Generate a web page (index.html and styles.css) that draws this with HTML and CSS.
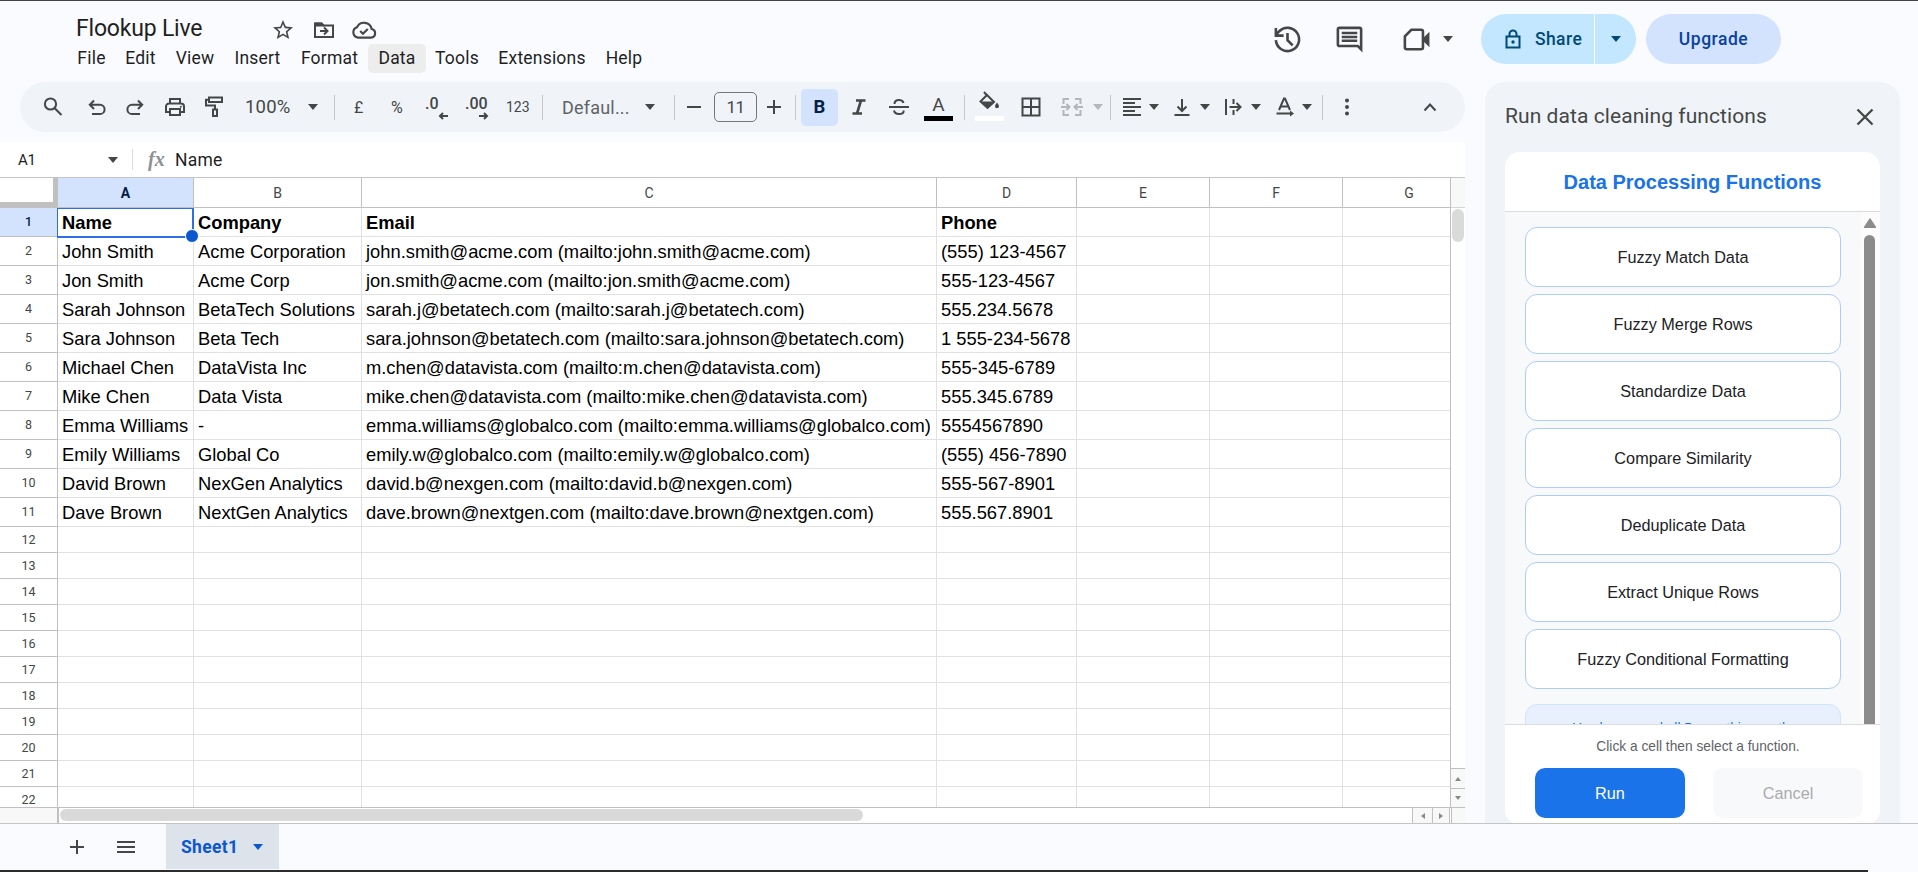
FILE: index.html
```html
<!DOCTYPE html>
<html lang="en">
<head>
    <meta charset="UTF-8">
    <meta name="viewport" content="width=device-width, initial-scale=1.0">
    <title>Flookup Live</title>
    <link rel="stylesheet" href="styles.css">
</head>
<body>

<header>
    <div class="doc">
        <div class="doc-title">
            <h1>Flookup Live</h1>
            <svg class="icon" viewBox="0 0 24 24"><path class="fill" d="M22 9.24l-7.19-.62L12 2 9.19 8.63 2 9.24l5.46 4.73L5.82 21 12 17.27 18.18 21l-1.63-7.03L22 9.24zM12 15.4l-3.76 2.27 1-4.28-3.32-2.88 4.38-.38L12 6.1l1.71 4.04 4.38.38-3.32 2.88 1 4.28L12 15.4z"/></svg>
            <svg class="icon" viewBox="0 0 24 24"><path d="M3 5.500h6.500l2 2H21V19H3z"/><path class="fill" d="M2.500 4.500h7.500l2.500 2.500v1.500h-10z"/><path d="M8 13h7M12 9.500l3.500 3.500-3.500 3.500"/></svg>
            <svg class="icon cloud" viewBox="0 0 24 24"><path d="M6.5 19h12a4 4 0 0 0 .6-7.9 7.2 7.2 0 0 0-13.6-1.6A4.9 4.9 0 0 0 6.5 19zM8.5 13l2.5 2.5 4.5-4.5"/></svg>
        </div>
        <nav>
            <span>File</span>
            <span>Edit</span>
            <span>View</span>
            <span>Insert</span>
            <span>Format</span>
            <span class="active">Data</span>
            <span>Tools</span>
            <span>Extensions</span>
            <span>Help</span>
        </nav>
    </div>
    <div class="actions">
        <svg class="icon-lg" viewBox="0 0 24 24"><path d="M3 12.500a9 9 0 1 0 2.600-6.900L3.500 8M3 3v6h6M12 7v5.500l4 4"/></svg>
        <svg class="icon-lg" viewBox="0 0 24 24"><path class="fill" d="M22 4c0-1.1-.9-2-2-2H4c-1.1 0-2 .9-2 2v12c0 1.1.9 2 2 2h14l4 4V4zm-2 13.2L18.8 16H4V4h16v13.2zM6 12h12v2H6zm0-3h12v2H6zm0-3h12v2H6z"/></svg>
        <svg class="icon-lg" viewBox="0 0 24 24"><path d="M8 4.500h7.500a1.500 1.500 0 0 1 1.500 1.500v12a1.500 1.500 0 0 1-1.500 1.500h-11A1.500 1.500 0 0 1 3 18V9.500z"/><path class="fill" d="M17 11l5-5v12l-5-5z"/></svg>
        <i class="caret"></i>
        <div class="share">
            <span class="share-main">
                <svg viewBox="0 0 16 20"><path d="M1.5 7.5h13v11h-13zM4.500 7.500V5a3.500 3.500 0 0 1 7 0v2.500"/><circle cx="8" cy="13" r="1.7"/></svg>
                Share
            </span>
            <span class="share-more"><i class="caret"></i></span>
        </div>
        <div class="upgrade">Upgrade</div>
    </div>
</header>

<div class="content">
    <div class="editor">
        <div class="toolbar">
            <svg class="icon" viewBox="0 0 24 24"><circle cx="9.5" cy="9" r="5.6"/><path d="M13.7 13.2 20.5 20"/></svg>
            <svg class="icon" viewBox="0 0 24 24"><path d="M7 19h8a4.6 4.6 0 0 0 0-9.2H5M9 5.500 4.800 9.800 9 14"/></svg>
            <svg class="icon" viewBox="0 0 24 24"><path d="M17 19H9a4.6 4.6 0 0 1 0-9.2h10M15 5.500l4.200 4.300L15 14"/></svg>
            <svg class="icon" viewBox="0 0 24 24"><path d="M7 8V4h10v4M7 17H3v-5.500A3 3 0 0 1 6 8.500h12a3 3 0 0 1 3 3V17h-4M7 14h10v6H7z"/><circle class="fill" cx="17.8" cy="11.7" r="1"/></svg>
            <svg class="icon" viewBox="0 0 24 24"><path d="M7 2.500h13v4.500H7zM7 4.800H4v5.700h9V14M11 14.500h4V21h-4z"/></svg>
            <span class="txt zoom">100%</span>
            <i class="caret"></i>
            <i class="sep"></i>
            <span class="txt sm">£</span>
            <span class="txt sm">%</span>
            <span class="dec">.0<svg viewBox="0 0 10 8"><path d="M10 4H2M5 1 2 4l3 3"/></svg></span>
            <span class="dec">.00<svg viewBox="0 0 10 8"><path d="M0 4h8M5 1l3 3-3 3"/></svg></span>
            <span class="txt num">123</span>
            <i class="sep"></i>
            <span class="txt font">Defaul...</span>
            <i class="caret"></i>
            <i class="sep"></i>
            <svg class="icon" viewBox="0 0 24 24"><path d="M5 12h14"/></svg>
            <span class="size">11</span>
            <svg class="icon" viewBox="0 0 24 24"><path d="M5 12h14M12 5v14"/></svg>
            <i class="sep"></i>
            <span class="bold">B</span>
            <svg class="icon" viewBox="0 0 24 24"><path class="heavy" d="M9 5.500h9.500M5.500 18.500H15M14 5.500l-4 13"/></svg>
            <svg class="icon" viewBox="0 0 24 24"><path d="M2 12h20M7.500 9c0-2.500 2-4 4.500-4s4 1 4.500 3M7 15.500c.5 2.300 2.500 3.500 5 3.500s4.700-1.300 4.700-3.600"/></svg>
            <span class="color">A</span>
            <i class="sep"></i>
            <span class="color paint"><svg viewBox="0 0 24 20"><path d="M8 1l3 3.500M11 4 18 11l-6.500 6L4.500 10.500z"/><path class="fill" d="M4 10.500h14l-6.300 6.800zM21 11.500c1.300 1.800 2 2.700 2 3.700a2 2 0 0 1-4 0c0-1 .7-1.900 2-3.700z"/></svg></span>
            <svg class="icon" viewBox="0 0 24 24"><path d="M3.500 3.500h17v17h-17zM12 3.500v17M3.500 12h17"/></svg>
            <svg class="icon off" viewBox="0 0 24 24"><path d="M9 4H3.500v5M3.500 15v5H9M15 4h5.500v5M20.500 15v5H15M1 12h8M6.500 9l3 3-3 3M23 12h-8M17.500 9l-3 3 3 3"/></svg>
            <i class="caret off"></i>
            <i class="sep"></i>
            <svg class="icon" viewBox="0 0 24 24"><path d="M3 4h18M3 8h12M3 12h18M3 16h12M3 20h18"/></svg>
            <i class="caret"></i>
            <svg class="icon" viewBox="0 0 24 24"><path d="M4.500 20h15M12 4v12M7.500 11.500 12 16l4.500-4.500"/></svg>
            <i class="caret"></i>
            <svg class="icon" viewBox="0 0 24 24"><path d="M5 4v16M12.500 4v5M12.500 15v5M8.500 12H19M15.500 8l4 4-4 4"/></svg>
            <i class="caret"></i>
            <svg class="icon" viewBox="0 0 24 24"><path d="M6 15 11 3.500h1L17 15M8 11.500h7M3.500 18.500H18"/><path class="fill" d="M17 15.500l4 3-4 3z"/></svg>
            <i class="caret"></i>
            <i class="sep"></i>
            <svg class="icon" viewBox="0 0 24 24"><circle class="fill" cx="12" cy="5.5" r="2"/><circle class="fill" cx="12" cy="12" r="2"/><circle class="fill" cx="12" cy="18.5" r="2"/></svg>
            <svg class="icon" viewBox="0 0 24 24"><path d="M6.500 15.500 12 9.500l5.500 6"/></svg>
        </div>

        <div class="formula-bar">
            <span class="cell-name">A1</span>
            <i class="caret"></i>
            <span class="fx">fx</span>
            <span class="formula">Name</span>
        </div>

        <div class="sheet">
            <div class="grid-area">
                <table>
                    <colgroup>
                        <col class="c-num"><col class="c-a"><col class="c-b"><col class="c-c"><col class="c-d"><col class="c-e"><col class="c-e"><col class="c-e">
                    </colgroup>
                    <thead>
                        <tr><th class="corner"></th><th class="selected">A</th><th>B</th><th>C</th><th>D</th><th>E</th><th>F</th><th>G</th></tr>
                    </thead>
                    <tbody id="rows"></tbody>
                </table>
                <div class="selection"></div>
            </div>
            <div class="vscroll">
                <div class="vscroll-head"></div>
                <div class="vtrack"><div class="vthumb"></div></div>
                <div class="vbtn"><i class="arrow up"></i></div>
                <div class="vbtn last"><i class="arrow down"></i></div>
            </div>
        </div>
        <div class="hscroll">
            <div class="hscroll-head"></div>
            <div class="htrack"><div class="hthumb"></div></div>
            <div class="hbtn"><i class="arrow left"></i></div>
            <div class="hbtn last"><i class="arrow right"></i></div>
            <div class="hend"></div>
        </div>
    </div>

    <aside>
        <div class="side-title">
            <h2>Run data cleaning functions</h2>
            <svg viewBox="0 0 18 18"><path d="M1.500 1.500l15 15M16.500 1.500l-15 15"/></svg>
        </div>
        <div class="card">
            <h3>Data Processing Functions</h3>
            <div class="card-body">
                <div class="functions">
                    <button>Fuzzy Match Data</button>
                    <button>Fuzzy Merge Rows</button>
                    <button>Standardize Data</button>
                    <button>Compare Similarity</button>
                    <button>Deduplicate Data</button>
                    <button>Extract Unique Rows</button>
                    <button>Fuzzy Conditional Formatting</button>
                    <div class="notice">You have used all 5 runs this month.</div>
                </div>
                <div class="side-scroll">
                    <svg viewBox="0 0 12 10"><path d="M6 1.500 10.800 8.800H1.200z"/></svg>
                    <div class="side-thumb"></div>
                </div>
            </div>
            <div class="card-footer">
                <p>Click a cell then select a function.</p>
                <div class="buttons">
                    <button class="run">Run</button>
                    <button class="cancel" disabled>Cancel</button>
                </div>
            </div>
        </div>
    </aside>
</div>

<footer>
    <svg class="add" viewBox="0 0 14 14"><path d="M7 0v14M0 7h14"/></svg>
    <svg class="all" viewBox="0 0 18 14"><path d="M0 2h18M0 7h18M0 12h18"/></svg>
    <div class="tab">Sheet1 <i class="caret"></i></div>
</footer>

<script>
const ROW_COUNT = 22;
const COLUMNS = 7;

const data = [
    ['Name', 'Company', 'Email', 'Phone'],
    ['John Smith', 'Acme Corporation', 'john.smith@acme.com (mailto:john.smith@acme.com)', '(555) 123-4567'],
    ['Jon Smith', 'Acme Corp', 'jon.smith@acme.com (mailto:jon.smith@acme.com)', '555-123-4567'],
    ['Sarah Johnson', 'BetaTech Solutions', 'sarah.j@betatech.com (mailto:sarah.j@betatech.com)', '555.234.5678'],
    ['Sara Johnson', 'Beta Tech', 'sara.johnson@betatech.com (mailto:sara.johnson@betatech.com)', '1 555-234-5678'],
    ['Michael Chen', 'DataVista Inc', 'm.chen@datavista.com (mailto:m.chen@datavista.com)', '555-345-6789'],
    ['Mike Chen', 'Data Vista', 'mike.chen@datavista.com (mailto:mike.chen@datavista.com)', '555.345.6789'],
    ['Emma Williams', '-', 'emma.williams@globalco.com (mailto:emma.williams@globalco.com)', '5554567890'],
    ['Emily Williams', 'Global Co', 'emily.w@globalco.com (mailto:emily.w@globalco.com)', '(555) 456-7890'],
    ['David Brown', 'NexGen Analytics', 'david.b@nexgen.com (mailto:david.b@nexgen.com)', '555-567-8901'],
    ['Dave Brown', 'NextGen Analytics', 'dave.brown@nextgen.com (mailto:dave.brown@nextgen.com)', '555.567.8901']
];

const tbody = document.getElementById('rows');

for (let r = 0; r < ROW_COUNT; r++) {
    const tr = document.createElement('tr');
    const values = data[r] || [];
    if (data[r]) tr.className = 'filled';

    const num = document.createElement('th');
    num.textContent = r + 1;
    if (r === 0) num.className = 'selected';
    tr.appendChild(num);

    for (let c = 0; c < COLUMNS; c++) {
        const td = document.createElement('td');
        td.textContent = values[c] || '';
        tr.appendChild(td);
    }
    tbody.appendChild(tr);
}
</script>

</body>
</html>
```
FILE: styles.css
```css
* {
    box-sizing: border-box;
}

body {
    margin: 0;
    width: 1918px;
    height: 872px;
    overflow: hidden;
    background: #f9fbff;
    border-top: 1px solid #444446;
    font-family: Roboto, Arial, sans-serif;
    color: #1f1f1f;
    display: flex;
    flex-direction: column;
}

svg {
    display: block;
    fill: none;
    stroke: #444746;
    stroke-width: 2;
}

svg .fill {
    fill: #444746;
    stroke: none;
}

.icon {
    width: 24px;
    height: 24px;
}

.icon-lg {
    width: 31px;
    height: 31px;
}

.caret {
    display: block;
    width: 0;
    border: 5px solid transparent;
    border-top: 6px solid #444746;
    border-bottom: 0;
}

/* ---------- header ---------- */

header {
    height: 81px;
    flex: none;
    display: flex;
    justify-content: space-between;
    padding: 0 137px 0 68px;
}

.doc-title {
    display: flex;
    align-items: center;
    height: 43px;
    padding: 14px 0 0 8px;
}

.doc-title h1 {
    margin: -2px 0 0;
    width: 195px;
    font-size: 23px;
    font-weight: 400;
    letter-spacing: -0.2px;
}

.doc-title .icon {
    margin-right: 17px;
}

.doc-title .cloud {
    width: 26px;
    height: 26px;
    margin-left: -2px;
}

nav {
    display: grid;
    grid-template-columns: 47px 51px 58px 67px 77px 58px 62px 108px 56px;
    font-size: 17.5px;
    line-height: 28px;
    letter-spacing: 0.2px;
    text-align: center;
    color: #1f1f1f;
}

nav .active {
    background: #ededed;
    border-radius: 5px;
    height: 29px;
}

.actions {
    display: flex;
    align-items: center;
    height: 50px;
    margin-top: 13px;
}

.actions .icon-lg {
    margin-right: 31px;
}

.actions .icon-lg:nth-child(3) {
    margin-right: 11px;
    margin-left: 5px;
}

.share {
    display: flex;
    height: 50px;
    margin-left: 28px;
    font-size: 17.5px;
    font-weight: 500;
    color: #004a77;
}

.share svg {
    width: 16px;
    height: 20px;
    stroke: #004a77;
    margin-right: 14px;
}

.share circle {
    fill: #004a77;
    stroke: none;
}

.share-main,
.share-more {
    display: flex;
    align-items: center;
    background: #c2e7ff;
}

.share-main {
    width: 113px;
    padding-left: 24px;
    border-radius: 25px 0 0 25px;
    margin-right: 1px;
    padding-bottom: 1px;
    letter-spacing: 0.4px;
}

.share-more {
    width: 41px;
    padding-left: 16px;
    border-radius: 0 25px 25px 0;
}

.share-more .caret {
    border-top-color: #004a77;
}

.upgrade {
    width: 135px;
    height: 50px;
    line-height: 50px;
    margin-left: 10px;
    border-radius: 25px;
    background: #d3e3fd;
    color: #0842a0;
    text-align: center;
    font-size: 17.5px;
    font-weight: 500;
    letter-spacing: 0.5px;
}

/* ---------- editor ---------- */

.content {
    height: 741px;
    flex: none;
    display: flex;
    justify-content: space-between;
    padding-right: 18px;
}

.editor {
    width: 1465px;
}

.toolbar {
    height: 50px;
    margin: 0 0 10px 20px;
    padding-left: 21px;
    border-radius: 25px;
    background: #f0f4f9;
    display: grid;
    grid-template-columns: 44px 38px 40px 39px 43px 63px 26px 20px 37px 34px 40px 41px 36px 20px 83px 29px 8px 32px 48px 33px 6px 46px 40px 37px 40px 11px 44px 41px 33px 17px 10px 29px 21px 30px 21px 30px 22px 29px 20px 13px 83px 24px;
    align-items: center;
    justify-items: start;
    color: #444746;
    white-space: nowrap;
}

.toolbar .off {
    opacity: 0.35;
}

.toolbar .heavy {
    stroke-width: 2.6;
}

.sep {
    width: 1px;
    height: 25px;
    background: #c7c7c7;
}

.txt {
    font-size: 17.5px;
}

.zoom {
    font-size: 18.5px;
    letter-spacing: 0.2px;
}

.sm {
    font-size: 16px;
}

.num {
    font-size: 14px;
}

.font {
    color: #5f6368;
    font-size: 18px;
    letter-spacing: 0.2px;
}

.dec {
    position: relative;
    font-size: 16px;
    font-weight: 500;
    line-height: 20px;
    padding-bottom: 7px;
}

.dec svg {
    position: absolute;
    right: -9px;
    bottom: 1px;
    width: 10px;
    height: 8px;
}

.dec:nth-child(12) svg {
    right: -1px;
}

.size {
    width: 43px;
    height: 30px;
    line-height: 28px;
    border: 1px solid #747775;
    border-radius: 5px;
    text-align: center;
    font-size: 17px;
    letter-spacing: -0.6px;
}

.bold {
    width: 37px;
    height: 37px;
    line-height: 36px;
    border-radius: 5px;
    background: #d3e3fd;
    color: #041e49;
    text-align: center;
    font-weight: 700;
    font-size: 18.5px;
}

.color {
    width: 29px;
    height: 26px;
    margin-top: 1px;
    border-bottom: 5px solid #000;
    text-align: center;
    font-size: 19px;
    line-height: 19px;
}

.paint {
    border-color: #fff;
    margin-top: -3px;
    height: 30px;
}

.paint svg {
    width: 24px;
    height: 20px;
    margin-left: 1px;
}

.formula-bar {
    height: 36px;
    background: #fff;
    border-bottom: 1px solid #c4c4c4;
    display: flex;
    align-items: center;
    padding-left: 18px;
    font-size: 17.5px;
}

.cell-name {
    width: 90px;
    font-size: 15px;
    letter-spacing: -0.4px;
}

.fx {
    margin-left: 14px;
    padding-left: 15px;
    width: 43px;
    line-height: 21px;
    border-left: 1px solid #dadce0;
    color: #8e9194;
    font: italic 700 20px/21px "Liberation Serif", serif;
}

.formula {
    letter-spacing: 0.2px;
}

/* ---------- sheet ---------- */

.sheet {
    display: flex;
    height: 629px;
}

.grid-area {
    position: relative;
    width: 1451px;
    overflow: hidden;
    border-right: 1px solid #c0c0c0;
    background: #fff;
}

table {
    table-layout: fixed;
    width: 1476px;
    border-collapse: separate;
    border-spacing: 0;
}

.c-num { width: 58px; }
.c-a { width: 136px; }
.c-b { width: 168px; }
.c-c { width: 575px; }
.c-d { width: 140px; }
.c-e { width: 133px; }

th,
td {
    padding: 0;
    height: 26px;
    border-right: 1px solid #e1e1e1;
    border-bottom: 1px solid #e1e1e1;
}

th {
    border-color: #c0c0c0;
    color: #444746;
    font-size: 12.5px;
    font-weight: 400;
    line-height: 22px;
}

thead th {
    height: 30px;
    font-size: 14px;
}

.filled th,
.filled td {
    height: 29px;
}

td {
    padding: 1px 0 0 4px;
    color: #000;
    font: 18.33px/24px "Liberation Sans", Arial, sans-serif;
    white-space: nowrap;
}

tbody tr:first-child td {
    font-weight: 700;
}

th.selected {
    background: #d3e3fd;
    color: #041e49;
    font-weight: 500;
}

thead th.selected {
    font-weight: 700;
}

th.corner {
    border-right: 5px solid #c0c0c0;
    border-bottom: 6px solid #c0c0c0;
}

.selection {
    position: absolute;
    left: 57px;
    top: 30px;
    width: 137px;
    height: 30px;
    border: 2px solid #2f6fe4;
    border-left-width: 1px;
    border-top-width: 1px;
}

.selection::after {
    content: "";
    position: absolute;
    right: -7px;
    bottom: -7px;
    width: 12px;
    height: 12px;
    border: 1px solid #fff;
    border-radius: 50%;
    background: #0b57d0;
}

.vscroll {
    width: 14px;
    background: #fff;
    display: flex;
    flex-direction: column;
}

.vscroll-head {
    height: 30px;
    background: #f8f8f8;
    border-bottom: 1px solid #d5d5d5;
}

.vtrack {
    flex: 1;
    padding: 1px;
}

.vthumb {
    height: 33px;
    border-radius: 6px;
    background: #dadada;
}

.vbtn {
    height: 20px;
    background: #f8f8f8;
    border-top: 1px solid #c0c0c0;
    display: flex;
    align-items: center;
    justify-content: center;
}

.vbtn.last {
    height: 19px;
}

.arrow {
    border: 3px solid transparent;
}

.up { border-bottom: 4px solid #888; border-top: 0; }
.down { border-top: 4px solid #888; border-bottom: 0; }
.left { border-right: 4px solid #888; border-left: 0; }
.right { border-left: 4px solid #888; border-right: 0; }

.hscroll {
    height: 16px;
    background: #fff;
    border-top: 1px solid #c0c0c0;
    display: flex;
}

.hscroll-head {
    width: 59px;
    background: #f8f8f8;
    border-right: 2px solid #c0c0c0;
}

.htrack {
    flex: 1;
    padding: 1px;
}

.hthumb {
    width: 803px;
    height: 12px;
    border-radius: 6px;
    background: #d9d9d9;
}

.hbtn {
    width: 20px;
    background: #f8f8f8;
    border-left: 1px solid #c0c0c0;
    display: flex;
    align-items: center;
    justify-content: center;
}

.hbtn.last {
    width: 18px;
    border-right: 1px solid #c0c0c0;
}

.hend {
    width: 14px;
    background: #f8f8f8;
    border-left: 1px solid #c0c0c0;
    margin-left: 1px;
}

/* ---------- sidebar ---------- */

aside {
    width: 415px;
    padding: 0 20px;
    border-radius: 20px 20px 0 0;
    background: #f0f4f9;
    overflow: hidden;
}

.side-title {
    height: 70px;
    display: flex;
    align-items: center;
    justify-content: space-between;
    padding-right: 6px;
}

.side-title h2 {
    margin: -2px 0 0;
    font-size: 21px;
    font-weight: 400;
    letter-spacing: 0.07px;
    color: #444746;
}

.side-title svg {
    width: 18px;
    height: 18px;
    stroke-width: 2.3;
}

.card {
    height: 673px;
    border-radius: 15px;
    background: #fff;
    overflow: hidden;
    font-family: "Liberation Sans", Arial, sans-serif;
}

.card h3 {
    margin: 0;
    height: 60px;
    line-height: 60px;
    border-bottom: 1px solid #dadce0;
    text-align: center;
    font-size: 20px;
    color: #1a73e8;
}

.card-body {
    height: 512px;
    display: flex;
    background: #f8f9fb;
    overflow: hidden;
}

.functions {
    width: 356px;
    padding: 15px 20px 0;
}

.functions button {
    display: block;
    width: 316px;
    height: 60px;
    margin-bottom: 7px;
    border: 1px solid #aecbfa;
    border-radius: 12px;
    background: #fff;
    color: #202124;
    font: 16.25px "Liberation Sans", Arial, sans-serif;
}

.notice {
    margin-top: 15px;
    height: 70px;
    padding-top: 16px;
    border: 1px solid #d2e3fc;
    border-radius: 12px;
    background: #e8f0fe;
    color: #1a73e8;
    text-align: center;
    font-size: 13.75px;
}

.side-scroll {
    width: 19px;
    background: #fcfcfc;
    padding: 5px 4px 0 3px;
}

.side-scroll svg {
    width: 14px;
    height: 12px;
    margin-bottom: 6px;
    margin-left: -1px;
}

.side-scroll path {
    fill: #8b8b8b;
    stroke: #8b8b8b;
    stroke-linejoin: round;
    stroke-width: 1;
}

.side-thumb {
    width: 11px;
    height: 520px;
    border-radius: 6px;
    background: #8b8b8b;
}

.card-footer {
    border-top: 1px solid #dadce0;
    background: #fff;
}

.card-footer p {
    margin: 13px 0 13px 11px;
    line-height: 17px;
    text-align: center;
    font-size: 13.75px;
    color: #5f6368;
}

.buttons {
    display: flex;
    gap: 28px;
    padding-left: 30px;
}

.buttons button {
    width: 150px;
    height: 50px;
    border: 0;
    border-radius: 10px;
    font: 16.25px "Liberation Sans", Arial, sans-serif;
}

.run {
    background: #1a73e8;
    color: #fff;
}

.cancel {
    background: #f8f9fa;
    color: #aaabad;
}

/* ---------- footer ---------- */

footer {
    position: relative;
    flex: 1;
    display: flex;
    align-items: center;
    padding-left: 70px;
    border-top: 1px solid #c4c4c4;
}

footer::after {
    content: "";
    position: absolute;
    left: 0;
    bottom: 0;
    width: 1868px;
    height: 2px;
    background: #2b2c2b;
}

.add {
    width: 14px;
    height: 14px;
    margin: 0 33px 2px 0;
}

.all {
    width: 18px;
    height: 14px;
    margin: 0 31px 2px 0;
}

.tab {
    align-self: flex-start;
    width: 113px;
    height: 45px;
    padding: 0 0 0 15px;
    background: #dde3eb;
    color: #0b57d0;
    display: flex;
    align-items: center;
    gap: 15px;
    font-size: 17.5px;
    font-weight: 700;
    letter-spacing: 0.3px;
}

.tab .caret {
    border-top-color: #0b57d0;
}
```
